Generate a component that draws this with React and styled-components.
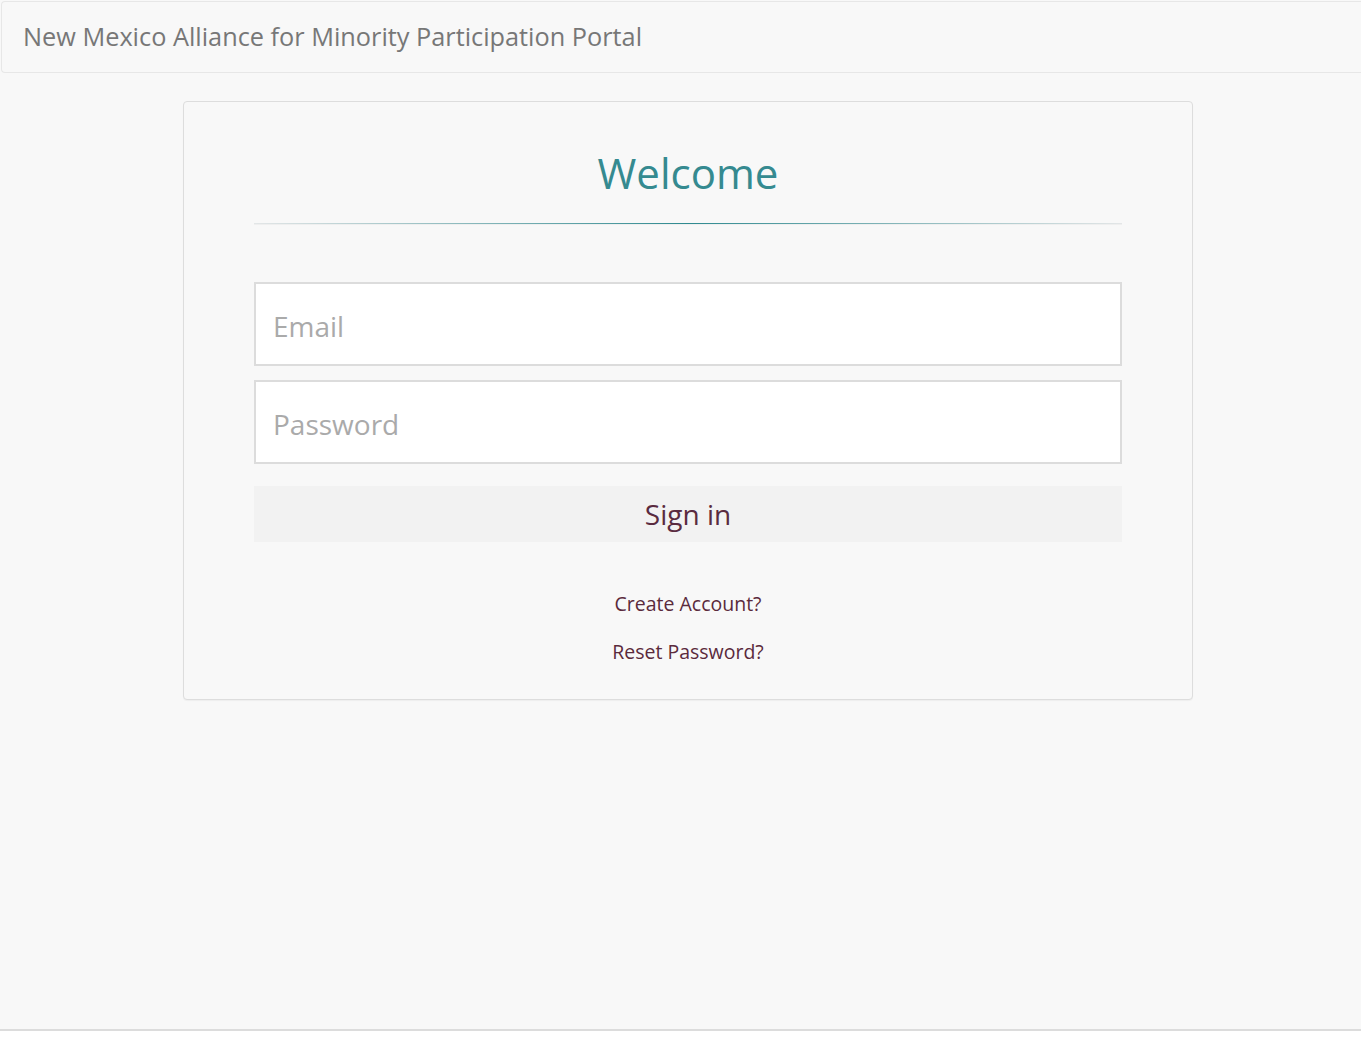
import styled, { createGlobalStyle } from 'styled-components';

const GlobalStyle = createGlobalStyle`
  * {
    box-sizing: border-box;
  }
  body {
    margin: 0;
    background: #f8f8f8;
    font-family: 'Open Sans', 'Noto Sans', sans-serif;
  }
`;

function App() {
  return (
    <>
      <GlobalStyle />
      <Page>
        <Navbar>
          <Brand>New Mexico Alliance for Minority Participation Portal</Brand>
        </Navbar>
        <Main>
          <Card>
            <Title>Welcome</Title>
            <Divider />
            <Form onSubmit={(e) => e.preventDefault()}>
              <Input type="email" placeholder="Email" />
              <Input type="password" placeholder="Password" />
              <SignIn type="submit">Sign in</SignIn>
            </Form>
            <Links>
              <LinkText href="#">Create Account?</LinkText>
              <LinkText href="#">Reset Password?</LinkText>
            </Links>
          </Card>
        </Main>
      </Page>
      <Footer>
        <FooterText>© New Mexico Alliance for Minority Participation</FooterText>
        <FooterText>Privacy Policy</FooterText>
      </Footer>
    </>
  );
}

const Page = styled.div`
  min-height: 1029px;
  display: flex;
  flex-direction: column;
  background: #f8f8f8;
`;

const Navbar = styled.header`
  height: 72px;
  margin: 1px 0 0 1px;
  border: 1px solid #e7e7e7;
  border-right: none;
  border-radius: 4px 0 0 4px;
  background: #f8f8f8;
  display: flex;
  align-items: center;
  padding-left: 21px;
`;

const Brand = styled.div`
  font-size: 25.3px;
  color: #777;
  margin-top: -2px;
`;

const Main = styled.main`
  flex: 1;
  padding: 28px 0 0 183px;
`;

const Card = styled.section`
  width: 1010px;
  border: 1px solid #dddddd;
  border-radius: 4px;
  background: #f8f8f8;
  padding: 47px 70px 34px;
  box-shadow: 0 1px 1px rgba(0, 0, 0, 0.04);
`;

const Title = styled.h1`
  margin: 0;
  text-align: center;
  font-weight: 400;
  font-size: 42px;
  line-height: 48px;
  color: #358a90;
`;

const Divider = styled.div`
  margin-top: 26px;
  height: 2px;
  background: linear-gradient(to right, #e3e6e7, #2f8a90 50%, #e3e6e7);
  border-bottom: 1px solid #efefef;
`;

const Form = styled.form`
  margin-top: 57px;
  display: flex;
  flex-direction: column;
  gap: 14px;
`;

const Input = styled.input`
  height: 84px;
  width: 100%;
  border: 2px solid #dcdcdc;
  background: #fff;
  padding: 4px 17px 0;
  font-family: inherit;
  font-size: 28px;
  color: #555;
  outline: none;

  &::placeholder {
    color: #aaa;
  }
`;

const SignIn = styled.button`
  margin-top: 8px;
  height: 56px;
  border: none;
  background: #f2f2f2;
  font-family: inherit;
  font-size: 28px;
  color: #5a2b40;
  cursor: pointer;
`;

const Links = styled.div`
  margin-top: 48px;
  display: flex;
  flex-direction: column;
  align-items: center;
  gap: 21px;
`;

const LinkText = styled.a`
  font-size: 19.5px;
  line-height: 27px;
  color: #5b2a3c;
  text-decoration: none;
`;

const Footer = styled.footer`
  border-top: 2px solid #dcdcdc;
  background: #fff;
  padding: 9px 20px 20px;
  display: flex;
  gap: 30px;
`;

const FooterText = styled.span`
  font-size: 13px;
  color: #ccc;
`;

export default App;
